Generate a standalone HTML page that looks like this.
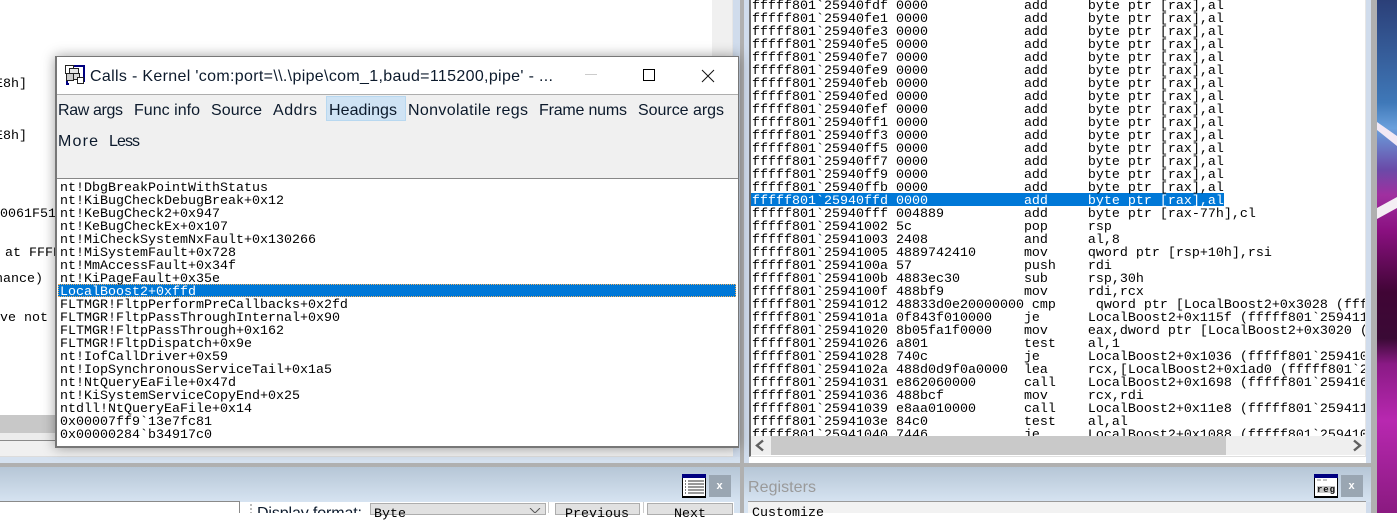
<!DOCTYPE html>
<html><head><meta charset="utf-8"><style>
html,body{margin:0;padding:0;width:1397px;height:513px;overflow:hidden;background:#fff}
div,pre,svg{position:absolute;margin:0;padding:0;box-sizing:border-box}
pre{font:13.333px/13px "Liberation Mono",monospace;color:#000;white-space:pre}
</style></head><body>
<!-- wallpaper -->
<svg style="left:1377px;top:0" width="20" height="513"><defs><linearGradient id="w" x1="0" y1="0" x2="0" y2="1">
<stop offset="0" stop-color="#2b3f78"/><stop offset=".2" stop-color="#3f78b8"/><stop offset=".25" stop-color="#6aa0dc"/><stop offset=".33" stop-color="#6a4aa8"/><stop offset=".38" stop-color="#a030a0"/><stop offset=".45" stop-color="#8a1080"/><stop offset=".57" stop-color="#400535"/><stop offset=".66" stop-color="#3a0a35"/><stop offset=".71" stop-color="#8a1a85"/><stop offset=".82" stop-color="#b828b0"/><stop offset="1" stop-color="#8a1a80"/></linearGradient></defs>
<rect width="20" height="513" fill="url(#w)"/><polygon points="0,122 20,136 20,146 0,130" fill="#f2e8f4"/><polygon points="0,208 20,197 20,208 0,219" fill="#f4eef4"/></svg>
<div style="left:1371px;top:0;width:6px;height:513px;background:#b0b0b0"></div>
<div style="left:1366px;top:0;width:5px;height:513px;background:#d0dcec"></div>
<div style="left:733px;top:0;width:7px;height:463px;background:#d0dcec"></div>
<div style="left:744px;top:0;width:5px;height:463px;background:#d0dcec"></div>
<div style="left:740px;top:0;width:4px;height:513px;background:#b0b0b0"></div>
<!-- left pane -->
<div style="left:0;top:0;width:733px;height:457px;background:#fff;border-right:1px solid #e6e6e6"></div>
<div style="left:712px;top:0;width:20px;height:415px;background:#f0f0f0"></div>
<div style="left:0;top:415px;width:732px;height:18px;background:#c8c8c8"></div>
<div style="left:0;top:433px;width:732px;height:7px;background:#ececec"></div>
<div style="left:0;top:440px;width:733px;height:1px;background:#8a8a8a"></div>
<div style="left:0;top:441px;width:733px;height:15px;background:#f0f0f0"></div>
<div style="left:0;top:456px;width:733px;height:1px;background:#dcdcdc"></div>
<div style="left:0;top:457px;width:740px;height:6px;background:#d5e1ef"></div>
<pre style="left:-5px;top:78px">E8h]</pre>
<pre style="left:-5px;top:130px">E8h]</pre>
<pre style="left:0;top:208px">0061F512</pre>
<pre style="left:5px;top:247px">at FFFF</pre>
<pre style="left:-5px;top:273px">nance)</pre>
<pre style="left:0;top:312px">ve not b</pre>
<!-- right pane -->
<div style="left:749px;top:0;width:617px;height:457px;background:#fff;border-left:2px solid #6e6e6e;border-right:1px solid #e6e6e6;border-bottom:1px solid #e0e0e0"></div>
<div style="left:751px;top:193px;width:473px;height:13px;background:#0078d7"></div>
<div style="left:752px;top:-2px;width:613px;height:438px;overflow:hidden"><pre style="left:0;top:2px">fffff801`25940fdf 0000            add     byte ptr [rax],al
fffff801`25940fe1 0000            add     byte ptr [rax],al
fffff801`25940fe3 0000            add     byte ptr [rax],al
fffff801`25940fe5 0000            add     byte ptr [rax],al
fffff801`25940fe7 0000            add     byte ptr [rax],al
fffff801`25940fe9 0000            add     byte ptr [rax],al
fffff801`25940feb 0000            add     byte ptr [rax],al
fffff801`25940fed 0000            add     byte ptr [rax],al
fffff801`25940fef 0000            add     byte ptr [rax],al
fffff801`25940ff1 0000            add     byte ptr [rax],al
fffff801`25940ff3 0000            add     byte ptr [rax],al
fffff801`25940ff5 0000            add     byte ptr [rax],al
fffff801`25940ff7 0000            add     byte ptr [rax],al
fffff801`25940ff9 0000            add     byte ptr [rax],al
fffff801`25940ffb 0000            add     byte ptr [rax],al
<span style="color:#fff">fffff801`25940ffd 0000            add     byte ptr [rax],al</span>
fffff801`25940fff 004889          add     byte ptr [rax-77h],cl
fffff801`25941002 5c              pop     rsp
fffff801`25941003 2408            and     al,8
fffff801`25941005 4889742410      mov     qword ptr [rsp+10h],rsi
fffff801`2594100a 57              push    rdi
fffff801`2594100b 4883ec30        sub     rsp,30h
fffff801`2594100f 488bf9          mov     rdi,rcx
fffff801`25941012 48833d0e20000000 cmp     qword ptr [LocalBoost2+0x3028 (fffff801`25944028)],0
fffff801`2594101a 0f843f010000    je      LocalBoost2+0x115f (fffff801`2594115f)
fffff801`25941020 8b05fa1f0000    mov     eax,dword ptr [LocalBoost2+0x3020 (fffff801`25944020)]
fffff801`25941026 a801            test    al,1
fffff801`25941028 740c            je      LocalBoost2+0x1036 (fffff801`25941036)
fffff801`2594102a 488d0d9f0a0000  lea     rcx,[LocalBoost2+0x1ad0 (fffff801`25941ad0)]
fffff801`25941031 e862060000      call    LocalBoost2+0x1698 (fffff801`25941698)
fffff801`25941036 488bcf          mov     rcx,rdi
fffff801`25941039 e8aa010000      call    LocalBoost2+0x11e8 (fffff801`259411e8)
fffff801`2594103e 84c0            test    al,al
fffff801`25941040 7446            je      LocalBoost2+0x1088 (fffff801`25941088)</pre></div>
<div style="left:751px;top:436px;width:614px;height:19px;background:#efefef"></div>
<div style="left:771px;top:436px;width:455px;height:19px;background:#c9c9c9"></div>
<svg style="left:751px;top:436px" width="614" height="19" fill="none" stroke="#606060" stroke-width="2.4"><path d="M12 4.5 L6 9.5 L12 14.5"/><path d="M603 4.5 L609 9.5 L603 14.5"/></svg>
<!-- bottom panels -->
<div style="left:0;top:463px;width:1371px;height:4px;background:#b0b0b0"></div>
<div style="left:0;top:467px;width:740px;height:35px;background:linear-gradient(#b6c6d6,#d6e3f1)"></div>
<div style="left:744px;top:467px;width:627px;height:35px;background:linear-gradient(#b6c6d6,#d6e3f1)"></div>
<div style="left:744px;top:502px;width:4px;height:11px;background:#d6e3f1"></div>
<div style="left:734px;top:502px;width:6px;height:11px;background:#d6e3f1"></div>
<div style="left:0;top:502px;width:734px;height:11px;background:#fff"></div>
<div style="left:0;top:501px;width:240px;height:12px;border-top:1px solid #8a8a8a;border-right:1px solid #8a8a8a;background:#fff"></div>
<div style="left:250px;top:504px;width:2px;height:9px;background:repeating-linear-gradient(#bbb 0 2px,#fff 2px 4px)"></div>
<div style="left:370px;top:503px;width:176px;height:12px;background:#e1e1e1;border:1px solid #adadad"></div>
<div style="left:555px;top:503px;width:85px;height:12px;background:#e1e1e1;border:1px solid #adadad"></div>
<div style="left:647px;top:503px;width:86px;height:12px;background:#e1e1e1;border:1px solid #adadad"></div>
<div style="left:548px;top:502px;width:1px;height:11px;background:#ccc"></div>
<div style="left:643px;top:502px;width:1px;height:11px;background:#ccc"></div>
<svg style="left:528px;top:508px" width="14" height="5" fill="none" stroke="#555"><path d="M2 0 L7 5 L12 0"/></svg>
<pre style="left:374px;top:508px">Byte</pre>
<pre style="left:565px;top:508px">Previous</pre>
<pre style="left:674px;top:508px">Next</pre>
<div style="left:748px;top:501px;width:618px;height:12px;background:#f2f2f2;border-top:1px solid #9a9a9a"></div>
<pre style="left:752px;top:507px;">Customize</pre>
<!-- table icon -->
<svg style="left:682px;top:474px" width="24" height="24" shape-rendering="crispEdges"><rect width="24" height="24" fill="#000"/><rect y="0" width="24" height="4" fill="#000080"/><rect x="1" y="4" width="22" height="18" fill="#fff"/><path d="M3 7H4M3 10H4M3 13H4M3 16H4M3 19H4" stroke="#000"/><path d="M6 7H22M6 10H22M6 13H22M6 16H22M6 19H22" stroke="#333"/></svg>
<div style="left:709px;top:475px;width:22px;height:22px;background:#9aa6b2"></div>
<!-- reg icon -->
<svg style="left:1314px;top:474px" width="24" height="24" shape-rendering="crispEdges"><rect width="24" height="24" fill="#000"/><rect width="24" height="4" fill="#000080"/><rect x="1" y="4" width="22" height="18" fill="#fff"/><path d="M3 6H7M9 6H13" stroke="#888"/><rect x="3" y="12" width="18" height="7" fill="#c8c8c8"/><text x="3" y="18" font-family="'Liberation Mono',monospace" font-size="9" font-weight="bold" fill="#111" textLength="18">reg</text></svg>
<div style="left:1341px;top:475px;width:22px;height:22px;background:#9aa6b2"></div>
<!-- dialog -->
<div style="left:55px;top:56px;width:684px;height:392px;background:#fff;border:2px solid #777;border-bottom-width:2px;border-top-width:1px;border-left-width:2px;border-right-width:1px;box-shadow:0 0 12px rgba(0,0,0,.38)"></div>
<div style="left:57px;top:94px;width:681px;height:1px;background:#aeaeae"></div>
<div style="left:57px;top:95px;width:681px;height:83px;background:#f0f0f0"></div>
<div style="left:57px;top:178px;width:681px;height:1px;background:#878787"></div>
<div style="left:326px;top:96px;width:80px;height:25px;background:#cfe3f4;border:1px solid #b8d8f0"></div>
<svg style="left:64px;top:64px" width="22" height="22" fill="#fff" stroke="#222" shape-rendering="crispEdges"><path d="M5 2H20V18" fill="none" stroke="#000080" stroke-width="2"/><path d="M3 16V20H5" fill="none" stroke="#000080" stroke-width="2"/><rect x="1.5" y="1.5" width="8" height="8"/><rect x="5.5" y="4.5" width="9" height="9" fill="#e8e8e8"/><rect x="2.5" y="9.5" width="7" height="7" fill="#ccc"/><rect x="9.5" y="9.5" width="6" height="6" fill="#ddd"/><rect x="13.5" y="13.5" width="6" height="6"/></svg>
<svg style="left:0;top:0" width="1397" height="513" font-family="'Liberation Sans',sans-serif" font-size="16" fill="#0c1a2c">
<text x="90" y="81" textLength="463">Calls - Kernel 'com:port=\\.\pipe\com_1,baud=115200,pipe' - ...</text>
<text x="58" y="115" textLength="65">Raw args</text>
<text x="134" y="115" textLength="66">Func info</text>
<text x="211" y="115" textLength="51">Source</text>
<text x="273" y="115" textLength="44">Addrs</text>
<text x="329" y="115" textLength="68">Headings</text>
<text x="408" y="115" textLength="120">Nonvolatile regs</text>
<text x="539" y="115" textLength="88">Frame nums</text>
<text x="638" y="115" textLength="86">Source args</text>
<text x="58" y="146" textLength="40">More</text>
<text x="109" y="146" textLength="31">Less</text>
<text x="257" y="518" textLength="105">Display format:</text>
<text x="748" y="492" textLength="68" fill="#9a9a9a">Registers</text>
<g fill="#fff" font-size="11" font-weight="bold"><text x="716.5" y="489">x</text><text x="1348.5" y="489">x</text></g>
<g fill="none" stroke-width="1"><path d="M585 74.5H597" stroke="#ccc"/><rect x="643.5" y="69.5" width="11" height="11" stroke="#000"/><path d="M702 70L714 82M714 70L702 82" stroke="#111"/></g>
</svg>
<div style="left:58px;top:284px;width:678px;height:13px;background:#0078d7;outline:1px dotted #f0b060;outline-offset:-1px"></div>
<pre style="left:60px;top:182px">nt!DbgBreakPointWithStatus
nt!KiBugCheckDebugBreak+0x12
nt!KeBugCheck2+0x947
nt!KeBugCheckEx+0x107
nt!MiCheckSystemNxFault+0x130266
nt!MiSystemFault+0x728
nt!MmAccessFault+0x34f
nt!KiPageFault+0x35e
<span style="color:#fff">LocalBoost2+0xffd</span>
FLTMGR!FltpPerformPreCallbacks+0x2fd
FLTMGR!FltpPassThroughInternal+0x90
FLTMGR!FltpPassThrough+0x162
FLTMGR!FltpDispatch+0x9e
nt!IofCallDriver+0x59
nt!IopSynchronousServiceTail+0x1a5
nt!NtQueryEaFile+0x47d
nt!KiSystemServiceCopyEnd+0x25
ntdll!NtQueryEaFile+0x14
0x00007ff9`13e7fc81
0x00000284`b34917c0</pre>
</body></html>
